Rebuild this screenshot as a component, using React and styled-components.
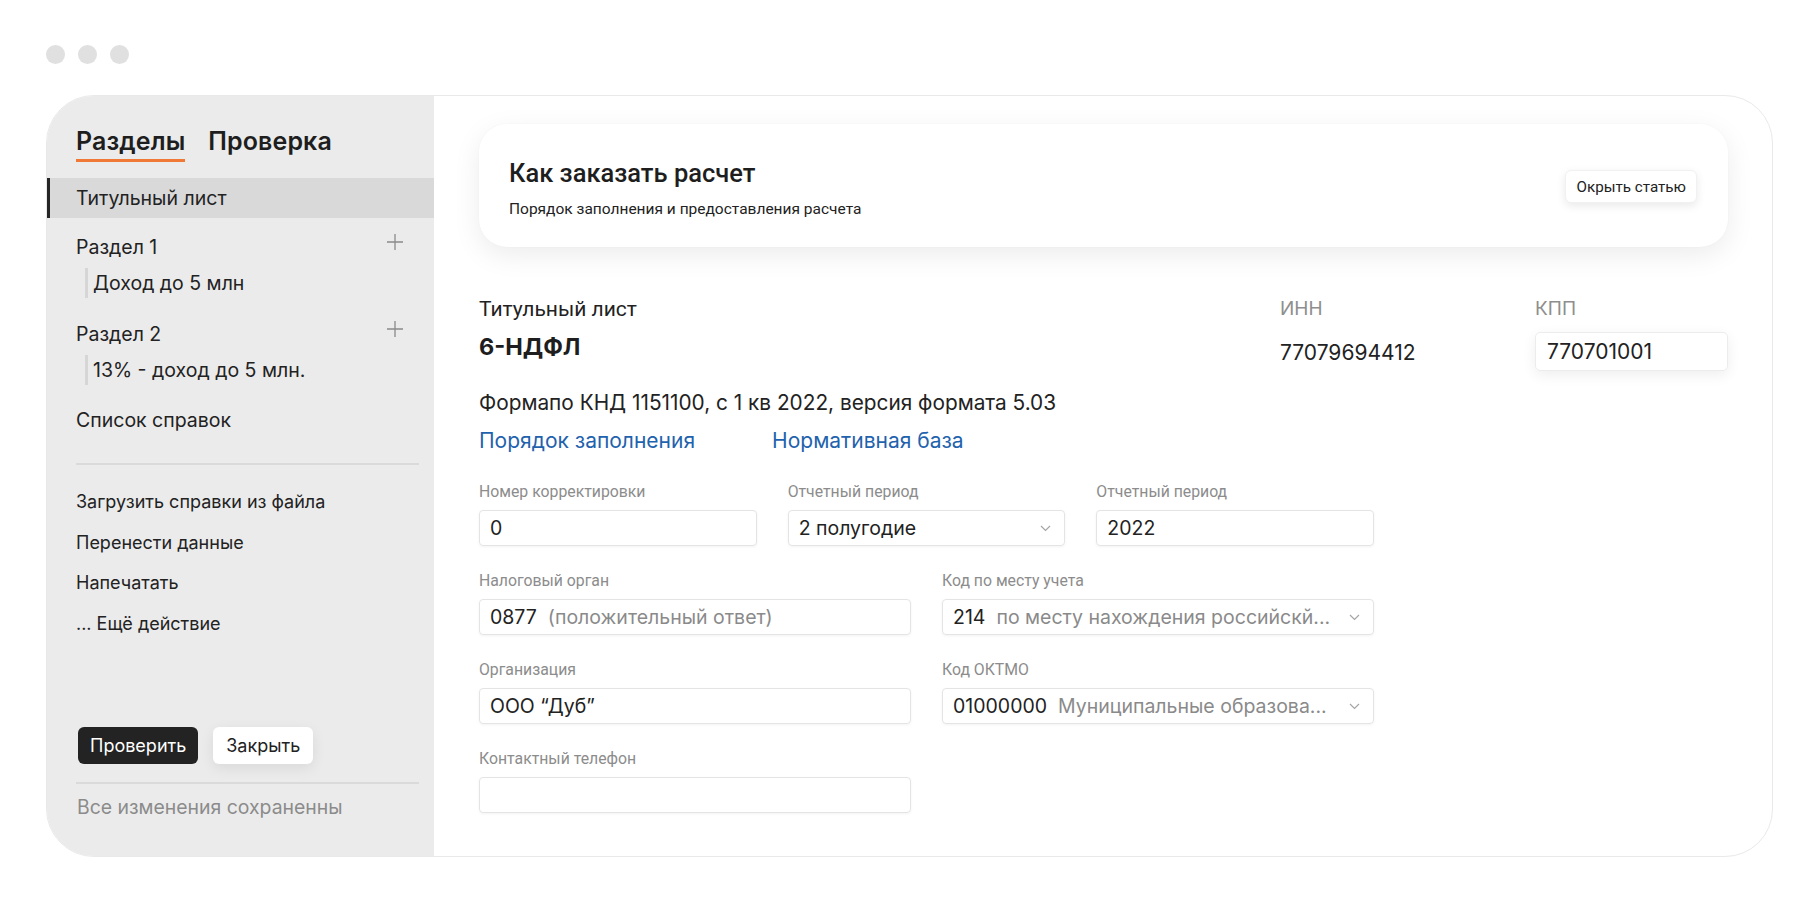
import React from "react";
import styled, { createGlobalStyle } from "styled-components";

const GEO = `Inter, "Noto Sans", "DejaVu Sans", sans-serif`;
const NARROW = `Roboto, "Noto Sans", "Liberation Sans", sans-serif`;

const GlobalStyle = createGlobalStyle`
  html, body { margin: 0; padding: 0; background: #ffffff; }
  body { font-family: ${GEO}; color: #1f1f1f; -webkit-font-smoothing: antialiased; }
  * { box-sizing: border-box; }
`;

const Page = styled.div`
  width: 1820px;
  height: 902px;
  padding: 45px 0 0 46px;
  background: #fff;
  overflow: hidden;
`;

const Dots = styled.div`
  display: flex;
  gap: 13px;
  height: 19px;
`;

const Dot = styled.span`
  width: 19px;
  height: 19px;
  border-radius: 50%;
  background: #e0e0e0;
`;

const Window = styled.div`
  margin-top: 31px;
  width: 1727px;
  height: 762px;
  border: 1px solid #e9e9e9;
  border-radius: 48px;
  overflow: hidden;
  display: grid;
  grid-template-columns: 387px 1fr;
  background: #fff;
`;

const Sidebar = styled.aside`
  background: #ebebeb;
  display: flex;
  flex-direction: column;
  padding: 32px 15px 38px 0;
`;

const Tabs = styled.div`
  display: flex;
  gap: 23px;
  padding-left: 29px;
`;

const Tab = styled.div`
  font-family: ${GEO};
  font-size: 25px;
  font-weight: 600;
  line-height: 27px;
  letter-spacing: 0.1px;
  color: #1e1e1e;
  padding-bottom: 4px;
  border-bottom: 3px solid ${(p) => (p.$active ? "#f07a35" : "transparent")};
`;

const NavItem = styled.div`
  margin-top: ${(p) => p.$mt || 0}px;
  margin-right: -15px;
  height: 40px;
  display: flex;
  align-items: center;
  padding-left: 26px;
  border-left: 3px solid ${(p) => (p.$active ? "#262626" : "transparent")};
  background: ${(p) => (p.$active ? "#d9d9d9" : "transparent")};
  font-size: 19.5px;
  color: #222;
`;

const GroupHead = styled.div`
  margin-top: ${(p) => p.$mt}px;
  height: 30px;
  display: flex;
  align-items: center;
  justify-content: space-between;
  padding-left: 29px;
  padding-right: 15px;
  font-size: 19.5px;
  color: #222;
`;

const PlusIcon = styled.svg`
  width: 18px;
  height: 18px;
  margin-top: -10px;
  color: #8a8a8a;
`;

const SubItem = styled.div`
  margin-top: 6px;
  margin-left: 38px;
  height: 30px;
  display: flex;
  align-items: center;
  padding-left: 5px;
  border-left: 3px solid #d6d6d6;
  font-size: 19.5px;
  color: #222;
`;

const Divider = styled.div`
  margin-left: 29px;
  margin-top: ${(p) => p.$mt}px;
  height: 2px;
  background: #dadada;
`;

const Actions = styled.div`
  margin-top: 16px;
  display: flex;
  flex-direction: column;
  padding-left: 29px;
`;

const Action = styled.div`
  height: 40.7px;
  display: flex;
  align-items: center;
  font-size: 18px;
  color: #222;
`;

const Bottom = styled.div`
  margin-top: auto;
  display: flex;
  flex-direction: column;
`;

const Buttons = styled.div`
  display: flex;
  gap: 15px;
  padding-left: 31px;
`;

const Button = styled.button`
  height: 37px;
  padding: 0 ${(p) => (p.$dark ? 12 : 13)}px;
  border: none;
  border-radius: 6px;
  font-family: ${GEO};
  font-size: 18px;
  cursor: pointer;
  background: ${(p) => (p.$dark ? "#232323" : "#ffffff")};
  color: ${(p) => (p.$dark ? "#ffffff" : "#222")};
  box-shadow: ${(p) => (p.$dark ? "none" : "0 4px 14px rgba(0,0,0,0.08)")};
`;

const Status = styled.div`
  margin-top: 12px;
  padding-left: 30px;
  font-size: 19.4px;
  line-height: 22px;
  color: #8b8b8b;
`;

const Main = styled.main`
  padding: 28px 44px 0 45px;
  display: flex;
  flex-direction: column;
`;

const InfoCard = styled.section`
  height: 123px;
  border-radius: 28px;
  background: #fff;
  box-shadow: 0 8px 28px rgba(0, 0, 0, 0.08), 0 0 2px rgba(0,0,0,0.03);
  display: flex;
  align-items: center;
  justify-content: space-between;
  padding: 0 31px 0 30px;
`;

const InfoText = styled.div`
  display: flex;
  flex-direction: column;
  gap: 12px;
  margin-top: 4px;
`;

const InfoTitle = styled.h2`
  margin: 0;
  font-family: ${NARROW};
  font-size: 25.5px;
  line-height: 30px;
  font-weight: 500;
  color: #1e1e1e;
`;

const InfoSub = styled.p`
  margin: 0;
  font-family: ${NARROW};
  font-size: 15.5px;
  line-height: 18px;
  color: #222;
`;

const GhostButton = styled.button`
  height: 33px;
  padding: 0 10px;
  border: 1px solid #f1f1f1;
  border-radius: 6px;
  background: #fff;
  box-shadow: 0 3px 10px rgba(0, 0, 0, 0.09);
  font-family: ${NARROW};
  font-size: 15.2px;
  color: #222;
  margin-top: 2px;
`;

const Header = styled.div`
  margin-top: 51px;
  display: grid;
  grid-template-columns: 1fr 255px 193px;
  grid-template-rows: 22px 39px;
  row-gap: 12px;
`;

const HeadLabel = styled.div`
  font-family: ${(p) => (p.$geo ? GEO : NARROW)};
  font-size: ${(p) => (p.$geo ? 19 : 21)}px;
  line-height: 22px;
  color: ${(p) => (p.$muted ? "#8e8e8e" : "#222")};
`;

const DocTitle = styled.div`
  font-size: 23.5px;
  font-weight: 700;
  line-height: 30px;
  color: #1e1e1e;
  align-self: start;
`;

const HeadValue = styled.div`
  font-size: 21px;
  color: #222;
  align-self: center;
  padding-top: 1px;
`;

const BoxInput = styled.div`
  height: 39px;
  border: 1px solid #ececec;
  border-radius: 5px;
  box-shadow: 0 4px 14px rgba(0, 0, 0, 0.07);
  display: flex;
  align-items: center;
  padding-left: 11px;
  font-size: 21px;
  color: #222;
`;

const FormatLine = styled.div`
  margin-top: 19px;
  font-size: 20.8px;
  line-height: 26px;
  color: #222;
`;

const Links = styled.div`
  margin-top: 12px;
  display: flex;
  gap: 77px;
`;

const Link = styled.a`
  font-size: 21px;
  line-height: 26px;
  color: #1f62ad;
  text-decoration: none;
`;

const Form = styled.div`
  margin-top: 29px;
  width: 895px;
  display: grid;
  grid-template-columns: repeat(6, 1fr);
  column-gap: 31px;
  row-gap: 26px;
`;

const Field = styled.div`
  grid-column: span ${(p) => p.$span};
  display: flex;
  flex-direction: column;
  gap: 9px;
`;

const Label = styled.label`
  font-family: ${NARROW};
  font-size: 15.8px;
  line-height: 18px;
  color: #8c8c8c;
`;

const Input = styled.div`
  height: 36px;
  border: 1px solid #e4e4e4;
  border-radius: 4px;
  box-shadow: 0 1px 3px rgba(0, 0, 0, 0.05);
  display: flex;
  align-items: center;
  gap: 11px;
  padding: 0 13px 0 10px;
  font-size: 19.5px;
  color: #222;
  white-space: nowrap;
  overflow: hidden;
`;

const Hint = styled.span`
  color: #8a8a8a;
  flex: 1;
  min-width: 0;
  overflow: hidden;
  text-overflow: ellipsis;
`;

const Spacer = styled.span`
  flex: 1;
`;

const Chevron = () => (
  <svg width="11" height="7" viewBox="0 0 11 7" style={{ flexShrink: 0 }}>
    <path d="M1 1l4.5 4.5L10 1" fill="none" stroke="#a5a5a5" strokeWidth="1.2" />
  </svg>
);

const Plus = () => (
  <PlusIcon viewBox="0 0 18 18">
    <path d="M9 1v16M1 9h16" stroke="currentColor" strokeWidth="1.3" />
  </PlusIcon>
);

export default function App() {
  return (
    <>
      <GlobalStyle />
      <Page>
        <Dots>
          <Dot />
          <Dot />
          <Dot />
        </Dots>
        <Window>
          <Sidebar>
            <Tabs>
              <Tab $active>Разделы</Tab>
              <Tab>Проверка</Tab>
            </Tabs>
            <NavItem $active $mt={16}>Титульный лист</NavItem>
            <GroupHead $mt={14}>
              Раздел 1 <Plus />
            </GroupHead>
            <SubItem>Доход до 5 млн</SubItem>
            <GroupHead $mt={21}>
              Раздел 2 <Plus />
            </GroupHead>
            <SubItem>13% - доход до 5 млн.</SubItem>
            <GroupHead $mt={20}>Список справок</GroupHead>
            <Divider $mt={28} />
            <Actions>
              <Action>Загрузить справки из файла</Action>
              <Action>Перенести данные</Action>
              <Action>Напечатать</Action>
              <Action>... Ещё действие</Action>
            </Actions>
            <Bottom>
              <Buttons>
                <Button $dark>Проверить</Button>
                <Button>Закрыть</Button>
              </Buttons>
              <Divider $mt={18} />
              <Status>Все изменения сохраненны</Status>
            </Bottom>
          </Sidebar>
          <Main>
            <InfoCard>
              <InfoText>
                <InfoTitle>Как заказать расчет</InfoTitle>
                <InfoSub>Порядок заполнения и предоставления расчета</InfoSub>
              </InfoText>
              <GhostButton>Окрыть статью</GhostButton>
            </InfoCard>
            <Header>
              <HeadLabel>Титульный лист</HeadLabel>
              <HeadLabel $geo $muted>ИНН</HeadLabel>
              <HeadLabel $geo $muted>КПП</HeadLabel>
              <DocTitle>6-НДФЛ</DocTitle>
              <HeadValue>77079694412</HeadValue>
              <BoxInput>770701001</BoxInput>
            </Header>
            <FormatLine>Формапо КНД 1151100, с 1 кв 2022, версия формата 5.03</FormatLine>
            <Links>
              <Link href="#">Порядок заполнения</Link>
              <Link href="#">Нормативная база</Link>
            </Links>
            <Form>
              <Field $span={2}>
                <Label>Номер корректировки</Label>
                <Input>0</Input>
              </Field>
              <Field $span={2}>
                <Label>Отчетный период</Label>
                <Input>
                  2 полугодие
                  <Spacer />
                  <Chevron />
                </Input>
              </Field>
              <Field $span={2}>
                <Label>Отчетный период</Label>
                <Input>2022</Input>
              </Field>
              <Field $span={3}>
                <Label>Налоговый орган</Label>
                <Input>
                  0877<Hint>(положительный ответ)</Hint>
                </Input>
              </Field>
              <Field $span={3}>
                <Label>Код по месту учета</Label>
                <Input>
                  214<Hint>по месту нахождения российскй...</Hint>
                  <Chevron />
                </Input>
              </Field>
              <Field $span={3}>
                <Label>Организация</Label>
                <Input>ООО “Дуб”</Input>
              </Field>
              <Field $span={3}>
                <Label>Код ОКТМО</Label>
                <Input>
                  01000000<Hint>Муниципальные образова...</Hint>
                  <Chevron />
                </Input>
              </Field>
              <Field $span={3}>
                <Label>Контактный телефон</Label>
                <Input />
              </Field>
            </Form>
          </Main>
        </Window>
      </Page>
    </>
  );
}
